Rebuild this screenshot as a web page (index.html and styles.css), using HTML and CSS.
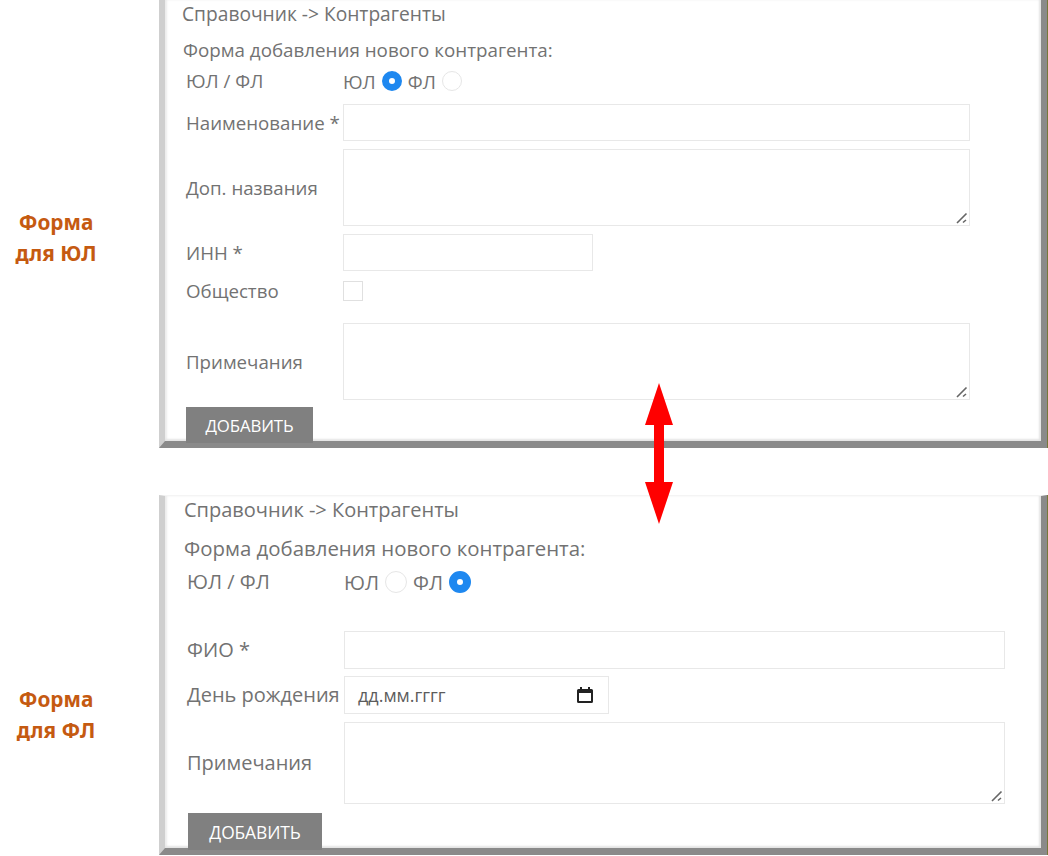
FILE: index.html
```html
<!DOCTYPE html>
<html lang="ru">
<head>
  <meta charset="UTF-8" />
  <title>Контрагенты</title>
  <link rel="stylesheet" href="styles.css">
</head>
<body>
  <div class="page">

    <!-- Form for legal entities -->
    <section class="section section-ul">
      <div class="caption">Форма<br>для ЮЛ</div>
      <form class="panel">
        <div class="crumbs">Справочник -&gt; Контрагенты</div>
        <div class="heading">Форма добавления нового контрагента:</div>
        <div class="row row-radio">
          <label class="label">ЮЛ / ФЛ</label>
          <span class="choice">ЮЛ <input class="radio" type="radio" name="kind1" checked> ФЛ <input class="radio" type="radio" name="kind1"></span>
        </div>
        <div class="row row-name">
          <label class="label">Наименование *</label>
          <input class="field" type="text">
        </div>
        <div class="row row-alt">
          <label class="label">Доп. названия</label>
          <div class="area-wrap">
            <textarea class="field area-alt"></textarea>
            <svg class="grip" width="12" height="12" viewBox="0 0 12 12"><path d="M1 11L10.500 1.500M7 10.500L10 8" stroke="#666" stroke-width="1.600" fill="none"/></svg>
          </div>
        </div>
        <div class="row row-inn">
          <label class="label">ИНН *</label>
          <input class="field field-inn" type="text">
        </div>
        <div class="row row-check">
          <label class="label">Общество</label>
          <input class="check" type="checkbox">
        </div>
        <div class="row row-notes">
          <label class="label">Примечания</label>
          <div class="area-wrap">
            <textarea class="field area-notes"></textarea>
            <svg class="grip" width="12" height="12" viewBox="0 0 12 12"><path d="M1 11L10.500 1.500M7 10.500L10 8" stroke="#666" stroke-width="1.600" fill="none"/></svg>
          </div>
        </div>
        <button class="add" type="button">ДОБАВИТЬ</button>
      </form>
    </section>

    <!-- Form for individuals -->
    <section class="section section-fl">
      <div class="caption">Форма<br>для ФЛ</div>
      <form class="panel">
        <div class="crumbs">Справочник -&gt; Контрагенты</div>
        <div class="heading">Форма добавления нового контрагента:</div>
        <div class="row row-radio">
          <label class="label">ЮЛ / ФЛ</label>
          <span class="choice">ЮЛ <input class="radio" type="radio" name="kind2"> ФЛ <input class="radio" type="radio" name="kind2" checked></span>
        </div>
        <div class="row row-fio">
          <label class="label">ФИО *</label>
          <input class="field" type="text">
        </div>
        <div class="row row-birth">
          <label class="label">День рождения</label>
          <div class="field date">
            <span>дд.мм.гггг</span>
            <svg class="date-icon" width="18" height="18" viewBox="0 0 18 18">
              <path d="M4 1h2v2h6V1h2v2h1.500A1.500 1.500 0 0 1 17 4.500v11a1.500 1.500 0 0 1-1.500 1.500h-13A1.500 1.500 0 0 1 1 15.500v-11A1.500 1.500 0 0 1 2.500 3H4V1zm-1 6v8h12V7H3z" fill="#222"/>
            </svg>
          </div>
        </div>
        <div class="row row-notes2">
          <label class="label">Примечания</label>
          <div class="area-wrap">
            <textarea class="field area-notes2"></textarea>
            <svg class="grip" width="12" height="12" viewBox="0 0 12 12"><path d="M1 11L10.500 1.500M7 10.500L10 8" stroke="#666" stroke-width="1.600" fill="none"/></svg>
          </div>
        </div>
        <button class="add" type="button">ДОБАВИТЬ</button>
      </form>
    </section>

    <!-- Double arrow between the two forms -->
    <svg class="arrow" width="30" height="142" viewBox="0 0 30 142">
      <polygon points="15,0 29,42 20,42 20,99 29,99 15,141 1,99 10,99 10,42 1,42" fill="#ff0000"/>
    </svg>
  </div>
</body>
</html>
```

FILE: styles.css
```css
* {
  box-sizing: border-box;
}
body {
  margin: 0;
  background: #fff;
  color: #727272;
  font-family: "Open Sans", "Noto Sans", Arial, sans-serif;
  font-size: 18.700px;
}
.page {
  position: relative;
  width: 1048px;
  height: 856px;
}
.section {
  display: flex;
}
.section-ul {
  height: 448px;
  margin-bottom: 47px;
}
.section-fl {
  height: 360px;
  font-size: 20px;
}
.caption {
  width: 159px;
  padding-right: 47px;
  text-align: center;
  color: #c55a11;
  font-family: "Noto Sans", Arial, sans-serif;
  font-size: 20.800px;
  font-weight: bold;
  line-height: 31px;
}
.section-ul .caption {
  padding-top: 207px;
}
.section-fl .caption {
  padding-top: 189px;
}
/* Bevelled frame */
.panel {
  width: 888px;
  background: #fff;
  border-style: solid;
  border-width: 0 6px 7px 6px;
  border-color: #f4f4f4 #8a8a8a #8a8a8a #cfcfcf;
  box-shadow: 1px 0 0 #77773a, inset -2px -2px 2px #e4e4e4, inset 2px 0 2px #ececec;
  padding-left: 21px;
  display: flex;
  flex-direction: column;
}
.panel > * {
  flex: none;
}
.section-fl .panel {
  border-top-width: 1px;
  padding-left: 22px;
}
.crumbs {
  height: 28px;
  line-height: 28px;
  margin-left: -4px;
  font-size: 19.200px;
}
.section-fl .crumbs {
  font-size: 20px;
  margin-left: -3px;
}
.heading {
  margin-left: -3px;
  margin-top: 8px;
  height: 28px;
  line-height: 28px;
  font-size: 18.800px;
}
.section-fl .heading {
  margin-top: 10px;
  font-size: 20.400px;
}
.row {
  display: flex;
  align-items: center;
}
.label {
  width: 157px;
  flex: none;
  line-height: 20px;
  white-space: nowrap;
}
.field {
  display: block;
  border: 1px solid #e8e8e8;
  background: #fff;
  width: 627px;
  height: 37px;
  padding: 0 10px;
  margin: 0;
  outline: none;
  font: inherit;
  color: inherit;
}
textarea.field {
  resize: none;
}
.area-wrap {
  position: relative;
}
.grip {
  position: absolute;
  right: 2px;
  bottom: 2px;
}
.row-radio {
  height: 32px;
  margin-top: 1px;
}
.section-fl .row-radio {
  margin-top: 3px;
  height: 34px;
}
.choice {
  display: flex;
  align-items: center;
  gap: 6px;
}
.radio {
  appearance: none;
  width: 20px;
  height: 20px;
  margin: 0;
  border-radius: 50%;
  border: 1px solid #e6e6e6;
  background: #fff;
}
.radio:checked {
  border: 7px solid #1e88f0;
}
.section-fl .radio {
  width: 22px;
  height: 22px;
}
.section-fl .radio:checked {
  border-width: 8px;
}
.check {
  appearance: none;
  width: 20px;
  height: 20px;
  margin: 0;
  border: 1px solid #e0e0e0;
  background: #fff;
}
.row-name {
  margin-top: 7px;
}
.row-alt {
  margin-top: 8px;
}
.area-alt {
  height: 77px;
}
.row-inn {
  margin-top: 8px;
}
.field-inn {
  width: 250px;
}
.row-check {
  margin-top: 10px;
}
.row-notes {
  margin-top: 22px;
}
.area-notes {
  height: 77px;
}
.add {
  width: 127px;
  height: 36px;
  margin-top: 7px;
  border: 0;
  padding: 0;
  background: #808080;
  color: #fff;
  font: inherit;
  font-size: 16.800px;
  font-weight: 500;
  letter-spacing: -0.1px;
}
.section-fl .add {
  width: 134px;
  height: 37px;
  margin-top: 9px;
  margin-left: 1px;
  font-size: 17.400px;
}
/* Individual form runs a little larger */
.section-fl .field {
  width: 661px;
}
.section-fl .label {
  width: 157px;
}
.row-fio {
  margin-top: 32px;
}
.row-fio .field {
  height: 38px;
}
.row-birth {
  margin-top: 7px;
}
.section-fl .date {
  width: 265px;
  height: 38px;
  display: flex;
  align-items: center;
  justify-content: space-between;
  padding: 0 14px 0 13px;
  font-size: 18px;
  color: #5c5c5c;
}
.row-notes2 {
  margin-top: 8px;
}
.section-fl .area-notes2 {
  height: 82px;
}
.arrow {
  position: absolute;
  left: 644px;
  top: 383px;
}
```
